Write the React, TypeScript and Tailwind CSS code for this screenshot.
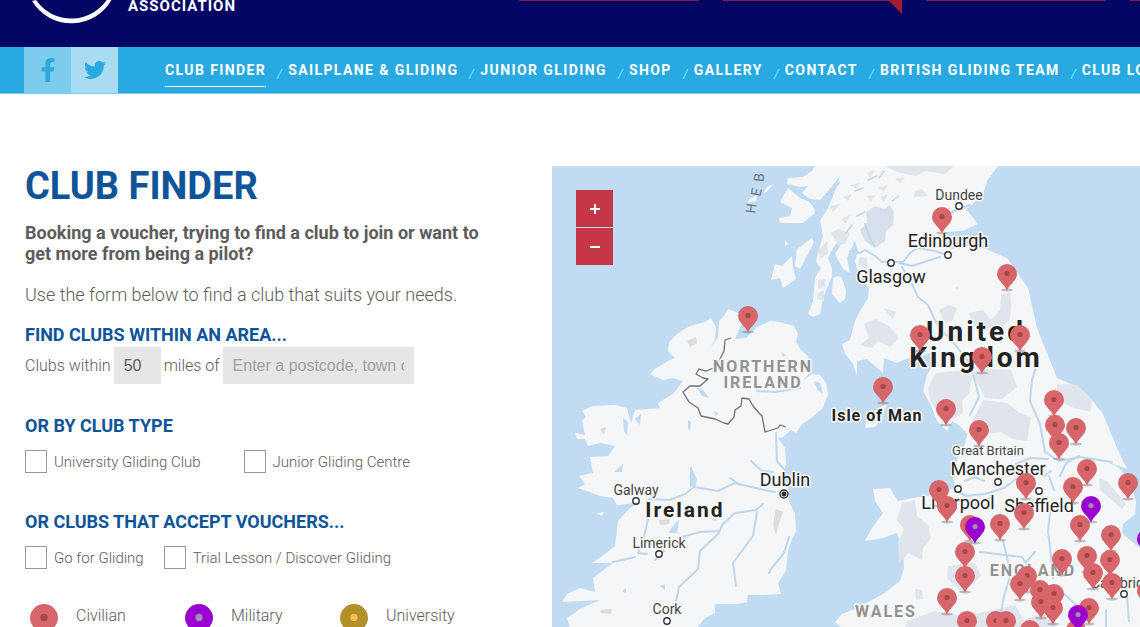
import { FaFacebookF, FaTwitter } from "react-icons/fa";

const navItems = [
  "Club Finder",
  "Sailplane & Gliding",
  "Junior Gliding",
  "Shop",
  "Gallery",
  "Contact",
  "British Gliding Team",
  "Club Login",
];

const colours = {
  civilian: { fill: "#d6666a", dot: "#a94449" },
  military: { fill: "#9a00cf", dot: "#a78bb5" },
  university: { fill: "#b38f2a", dot: "#f2c14e" },
};

type ClubKind = keyof typeof colours;

const civilianClubs = [
  [748, 315], [942, 216], [1007, 273], [920, 334], [1020, 334], [982, 356], [883, 386],
  [946, 408], [979, 429], [1054, 399], [1055, 424], [1076, 427], [1059, 442], [1087, 468],
  [1073, 486], [1128, 482], [1026, 482], [939, 489], [947, 505], [1024, 512], [1000, 523],
  [970, 524], [1080, 524], [1111, 534], [965, 551], [965, 575], [947, 597], [1062, 558],
  [1087, 555], [1110, 559], [1093, 572], [1112, 582], [1027, 575], [1020, 583], [1040, 589],
  [1054, 593], [1041, 601], [1053, 607], [1089, 607], [1147, 590], [967, 620], [996, 620],
  [1006, 620], [1030, 629], [1076, 629],
];

const militaryClubs = [[1091, 505], [975, 526], [1078, 614], [1147, 538]];

const towns = [
  [959, 205], [948, 254], [891, 262], [636, 500], [659, 553], [667, 620],
  [958, 488], [998, 481], [1039, 490], [1124, 593],
];

function PinShape({ kind }: { kind: ClubKind }) {
  return (
    <>
      <ellipse cx="0" cy="16" rx="6" ry="1.5" fill="#777" opacity="0.45" />
      <path d="M0 16.500C-2.500 10-10 6.500-10 0A10 10 0 0 1 10 0C10 6.500 2.500 10 0 16.500Z" fill={colours[kind].fill} />
      <circle cy="-0.5" r="2.6" fill={colours[kind].dot} />
    </>
  );
}

function ClubMap() {
  return (
    <svg
      className="h-full w-full"
      viewBox="0 0 588 462"
      preserveAspectRatio="xMinYMin slice"
      role="img"
      aria-label="Map of gliding clubs"
      fontFamily="Roboto, sans-serif"
    >
      <rect width="2000" height="2000" fill="#c1dbf2" />
      <g transform="translate(-552 -165)">
        {/* land */}
        <g fill="#f5f6f7">
          <path d="M650 373L655 368L668 360L675 357L668 350L669 341L678 332L690 325L705 321L711 317L716 326L715 338L711 346L718 336L719 320L724 315L728 308L738 312L743 320L737 333L735 338L746 337L752 331L757 326L770 320L780 321L794 325L798 333L796 341L801 349L808 355L811 366L808 374L802 380L812 373L820 374L826 382L828 393L823 407L810 418L802 423L796 432L791 429L783 436L778 437L785 447L786 463L782 476L789 490L789 500L795 513L796 530L792 538L788 550L786 570L778 582L781 593L763 594L748 594L747 601L737 603L715 603L715 612L705 617L697 627L697 680L570 680L570 627L567 617L580 608L600 599L562 601L567 593L580 587L595 591L593 577L605 568L613 562L592 562L605 553L615 545L618 520L630 507L640 502L617 504L613 497L600 495L578 487L585 483L579 475L593 472L590 456L608 455L615 445L600 442L588 445L585 438L577 438L575 432L585 434L582 420L586 416L582 410L592 405L615 404L627 407L631 422L635 409L660 407L658 402L673 393L683 380L673 377L663 379Z" />
          <path d="M815 165L812 170L803 176L788 177L787 183L800 186L808 185L802 192L810 198L820 199L828 190L840 175L836 188L828 207L820 220L823 235L818 252L816 260L821 267L815 277L813 300L808 313L813 316L820 313L823 297L832 275L832 268L828 257L833 247L842 234L840 245L835 253L843 268L850 272L847 257L855 240L858 250L855 260L858 270L864 278L869 288L868 297L860 310L855 320L850 339L842 343L845 353L853 363L857 375L857 360L867 358L883 372L884 357L897 362L908 357L922 355L937 350L932 366L927 374L923 390L927 397L932 407L937 420L947 430L952 420L960 425L967 433L965 443L958 457L952 470L955 487L940 493L912 497L898 500L890 487L873 488L875 500L883 512L872 527L865 540L883 537L897 532L903 548L904 567L900 580L883 593L857 607L842 613L835 621L842 627L842 680L1200 680L1200 560L1140 547L1130 539L1122 532L1123 523L1135 513L1136 500L1128 477L1118 466L1100 458L1127 468L1117 447L1103 413L1092 399L1080 387L1057 377L1053 367L1037 327L1028 287L1018 273L1007 257L983 247L975 243L967 245L950 248L957 237L963 230L978 223L970 213L966 209L983 193L987 180L998 165Z" />
          <path d="M780 201L788 187L800 197L813 202L815 212L803 222L780 222L779 217L790 215L792 207Z" />
          <path d="M812 237L814 241L800 268L795 265L797 248Z" />
          <path d="M775 263L782 265L792 255L793 267L796 278L783 287L780 277L771 279Z" />
          <path d="M833 277L838 275L842 277L846 290L845 298L840 302L832 293Z" />
          <path d="M887 403L882 417L875 426L865 427L867 417L877 408Z" />
          <path d="M773 183L767 191L763 192L767 186ZM785 239L788 243L785 245ZM749 198L757 194L756 200L748 202ZM597 512L604 511L602 515Z" />
        </g>

        {/* high ground */}
        <g fill="#dfe5ea">
          <path d="M866 211L875 205L884 208L890 204L894 212L893 224L886 230L885 240L875 247L865 240L860 229L867 222Z" fill="#d6e0ea" />
          <path d="M884 165L954 165L945 173L925 170L916 175L900 172Z" />
          <path d="M831 232L838 228L850 232L845 243L838 244ZM818 250L827 240L828 252L821 258ZM818 279L826 278L825 286L818 288ZM818 292L824 289L824 300L817 298Z" />
          <path d="M860 256L867 257L868 268L858 264ZM915 190L922 188L928 195L914 196ZM830 205L840 203L833 211Z" />
          <path d="M864 323L876 318L889 325L899 337L890 346L878 340L872 347L860 344L869 337ZM883 307L896 311L893 318ZM939 309L949 304L957 307L953 319L945 323Z" />
          <path d="M969 312L983 309L991 319L1000 309L1001 294L1010 291L1011 305L1010 318L1003 326L990 328L980 333L973 323Z" />
          <path d="M936 372L965 369L972 376L969 392L962 400L963 412L953 418L936 409L930 398L928 386Z" />
          <path d="M979 367L1011 369L1017 386L1002 398L985 397L979 385L973 374ZM983 399L1007 402L1020 412L1031 416L1027 440L1013 438L1001 431L979 434L972 421Z" />
          <path d="M1057 383L1077 384L1092 400L1090 411L1074 407L1058 400Z" />
          <path d="M902 502L915 499L917 515L928 524L931 537L923 547L922 559L908 552L899 563L898 541L904 528L897 519Z" />
          <path d="M948 565L975 562L981 575L972 584L962 592L947 577ZM907 620L935 610L957 614L980 612L1015 604L1024 619L1045 612L1058 627L905 627ZM915 588L922 589L923 598L916 599ZM1099 477L1107 480L1126 503L1122 508L1100 489Z" />
        </g>
        <g fill="#dcdddd">
          <path d="M687 340L696 336L697 342L690 346ZM600 428L606 426L604 434ZM659 519L670 518L669 523L660 524ZM710 518L717 517L716 520ZM776 508L783 511L779 522L776 534L773 524ZM600 609L612 608L611 613L601 612Z" />
          <path d="M867 172L875 169L870 177ZM850 184L860 182L856 188ZM843 196L852 193L848 200ZM878 187L888 184L884 190ZM895 178L905 176L900 182ZM866 195L876 194L871 200ZM880 196L888 193L884 201ZM841 218L850 214L846 223ZM955 287L959 285L957 289Z" opacity="0.7" />
        </g>

        {/* lakes, lochs and rivers */}
        <g fill="#c1dbf2">
          <path d="M691 465L693 470L697 478L695 486L691 484ZM676 521L679 519L677 532L668 532ZM688 419L691 421L690 430L688 427ZM614 471L623 463L622 471ZM623 417L628 421L627 435L624 430ZM635 418L641 413L640 424ZM660 585L665 583L665 589ZM622 590L626 587L626 592Z" />
          <path d="M696 386L703 389L709 397L702 395ZM814 380L820 382L823 392L818 390ZM781 351L786 354L783 356ZM714 410L718 412L716 416Z" />
          <path d="M946 231L970 229L958 237L948 238Z" />
        </g>
        <g fill="none" stroke="#bed7ec" strokeWidth="2" strokeLinecap="round" strokeLinejoin="round">
          <path d="M649 498L670 499L685 493L694 486L718 490L735 482L760 488L775 491M691 485V467M730 477L740 484" />
          <path d="M763 503L756 509L735 512L722 524L719 532L700 550L698 568L679 586L676 600M682 536L700 531L720 530M757 511L753 535L733 562L736 585M789 536L784 552L771 568L769 572M648 518L643 540L638 552L647 553M664 550L655 559" />
          <path d="M776 432L777 460L787 472M751 460L762 470L773 471M757 390L775 391L800 387M613 561L635 556" />
          <path d="M850 250L860 252L865 249L875 255L882 261L903 261L911 251L918 247L935 250L947 254M899 262L912 265L930 259L940 256M902 266L913 285L918 296L928 304L933 315L938 325L953 341L968 360L975 380L979 396L970 414" />
          <path d="M828 193L839 182M865 223L870 238L874 245M952 211L970 204M1037 363L1032 379L1030 400L1040 423L1045 451L1059 460L1080 456L1112 461M1060 475L1066 462L1079 455M1048 458L1030 457L1016 463" />
          <path d="M955 489L966 495L985 493L1004 487L1016 478L1028 470L1044 475L1051 470M965 480L975 476L984 480M976 503L990 497M1054 489L1049 475" />
          <path d="M1047 496L1050 512L1048 530L1051 555L1053 577M980 551L1005 554L1022 556L1029 567M1003 540L1008 561L1010 576L1004 595L1001 611M1027 560L1035 551M1059 588L1076 604L1090 615M1127 596L1129 620M1106 609V627" />
          <path d="M855 190L863 187M868 179L877 175M892 200L899 195M857 215L865 211M879 177L884 170M846 232L852 224M815 207L809 199" strokeWidth="1.5" />
        </g>

        {/* border */}
        <path
          d="M731 337L725 339L724 350L720 358V365L711 368L706 370L699 368L696 373L703 377L708 378L700 385L690 385L683 391L689 401L698 407L701 415L715 418L724 422L728 423L734 416L735 409L741 405L742 397L749 398L753 405L759 412L762 415L765 431L778 427L780 424L786 426"
          fill="none"
          stroke="#6f6f6f"
          strokeWidth="1.3"
          strokeLinejoin="round"
        />

        <g fill="#fff" stroke="#333" strokeWidth="1.4">
          {towns.map(([x, y]) => (
            <circle key={`${x}-${y}`} cx={x} cy={y} r="3.2" />
          ))}
          <circle cx="784" cy="493" r="4" />
          <circle cx="784" cy="493" r="1.8" fill="#222" />
        </g>

        {/* labels */}
        <g textAnchor="middle" fill="#222" stroke="#f8f8f8" strokeWidth="3" strokeLinejoin="round" paintOrder="stroke">
          <g fontSize="14" fill="#444">
            <text x="959" y="199">Dundee</text>
            <text x="636" y="494">Galway</text>
            <text x="659" y="547">Limerick</text>
            <text x="667" y="613">Cork</text>
            <text x="988" y="454" fontSize="13">Great Britain</text>
            <text x="1125" y="587">Cambridge</text>
          </g>
          <g fontSize="18" fill="#222">
            <text x="948" y="246">Edinburgh</text>
            <text x="891" y="282">Glasgow</text>
            <text x="785" y="485">Dublin</text>
            <text x="998" y="474">Manchester</text>
            <text x="958" y="508">Liverpool</text>
            <text x="1039" y="511">Sheffield</text>
          </g>
          <g fontSize="28" fontWeight="700" letterSpacing="3">
            <text x="976" y="340">United</text>
            <text x="976" y="366">Kingdom</text>
          </g>
          <text x="685" y="516" fontSize="21" fontWeight="700" letterSpacing="2">Ireland</text>
          <text x="877" y="420" fontSize="16" fontWeight="700" letterSpacing="1">Isle of Man</text>
          <g fontSize="16" fontWeight="700" letterSpacing="2" fill="#929292">
            <text x="763" y="371">NORTHERN</text>
            <text x="763" y="387">IRELAND</text>
            <text x="1033" y="575">ENGLAND</text>
            <text x="886" y="616">WALES</text>
          </g>
        </g>
        <g fontSize="14" fill="#69757f" textAnchor="middle">
          <text transform="translate(756 208) rotate(-82)">H</text>
          <text transform="translate(761 192) rotate(-78)">E</text>
          <text transform="translate(764 177) rotate(-85)">B</text>
        </g>

        {civilianClubs.map(([x, y]) => (
          <g key={`${x}-${y}`} transform={`translate(${x} ${y})`}>
            <PinShape kind="civilian" />
          </g>
        ))}
        {militaryClubs.map(([x, y]) => (
          <g key={`${x}-${y}`} transform={`translate(${x} ${y})`}>
            <PinShape kind="military" />
          </g>
        ))}
      </g>
    </svg>
  );
}

function Header() {
  return (
    <header className="relative h-[47px] overflow-hidden bg-[#030664] text-white">
      <div className="flex items-start pl-6">
        <svg className="h-6 w-[94px]" viewBox="0 0 94 24" aria-hidden="true">
          <path d="M8 1A46 46 0 0 0 88 -1L84 -2A43 43 0 0 1 12 0Z" fill="#fff" />
        </svg>
        <span className="-mt-1 ml-[10px] text-[15px] leading-5 font-bold tracking-[1px]">ASSOCIATION</span>
      </div>
      <div className="absolute top-0 left-[519px] flex gap-6">
        <div className="h-px w-[180px] bg-[#7f1b49]" />
        <div className="relative h-px w-[179px] bg-[#7f1b49]">
          <svg className="absolute top-0 right-0 h-[14px] w-[14px]" viewBox="0 0 14 14" aria-hidden="true">
            <path d="M0 0H14V14Z" fill="#9f1e32" />
          </svg>
        </div>
        <div className="h-px w-[180px] bg-[#7f1b49]" />
        <div className="h-px w-[180px] bg-[#7f1b49]" />
      </div>
    </header>
  );
}

function Nav() {
  return (
    <nav className="flex h-[47px] overflow-hidden border-b border-[#7fc8ea] bg-[#29a9e1] pl-6">
      <a href="#facebook" aria-label="Facebook" className="flex w-[47px] shrink-0 items-center justify-center bg-[#7dcbed] text-[#29a9e1]">
        <FaFacebookF size={24} />
      </a>
      <a href="#twitter" aria-label="Twitter" className="flex w-[47px] shrink-0 items-center justify-center bg-[#a9dcf3] text-[#29a9e1]">
        <FaTwitter size={22} />
      </a>
      <ul className="ml-[47px] flex text-sm font-bold tracking-widest whitespace-nowrap text-white uppercase">
        {navItems.map((item, i) => (
          <li key={item} className="flex items-start">
            {i > 0 && (
              <svg className="mt-[21px] mr-[5px] ml-[10px] h-3 w-[7px]" viewBox="0 0 7 12" aria-hidden="true">
                <path d="M1 11L6 1" stroke="#4be0f5" strokeWidth="1.6" />
              </svg>
            )}
            <a
              href={`#${item.toLowerCase().replace(/\W+/g, "-")}`}
              className={i === 0 ? "mt-[13px] border-b border-white pb-[6px]" : "mt-[13px]"}
            >
              {item}
            </a>
          </li>
        ))}
      </ul>
    </nav>
  );
}

function Check({ id, label }: { id: string; label: string }) {
  return (
    <div className="flex items-center gap-[7px]">
      <input id={id} type="checkbox" className="h-[23px] w-[22px] appearance-none border border-[#999] bg-white checked:bg-[#0e5499]" />
      <label htmlFor={id} className="text-[15px] leading-5 font-light">{label}</label>
    </div>
  );
}

function LegendItem({ kind, label }: { kind: ClubKind; label: string }) {
  return (
    <li className="flex w-[155px] items-start">
      <svg className="mt-[2px] ml-[5px] h-[38px] w-7 shrink-0" viewBox="-10 -10 20 27" aria-hidden="true">
        <PinShape kind={kind} />
      </svg>
      <span className="ml-[18px] text-base leading-7 font-light">{label}</span>
    </li>
  );
}

export default function App() {
  const heading = "text-lg leading-6 font-bold text-[#0e5499] uppercase";

  return (
    <div className="h-screen overflow-hidden bg-white font-[Roboto,sans-serif] text-[#5c5c5c]">
      <Header />
      <Nav />
      <main className="grid grid-cols-[527px_1fr] pt-[72px] pl-[25px]">
        <section>
          <h1 className="text-[38px] leading-10 font-bold text-[#0e5499] uppercase">Club Finder</h1>
          <p className="mt-4 mr-12 text-lg leading-[21px] font-bold">
            Booking a voucher, trying to find a club to join or want to get more from being a pilot?
          </p>
          <p className="mt-5 text-lg leading-[21px] font-light">Use the form below to find a club that suits your needs.</p>
          <form>
            <h2 className={`mt-[18px] ${heading}`}>Find clubs within an area...</h2>
            <div className="flex items-center gap-[3px] text-base font-light">
              <label htmlFor="miles">Clubs within</label>
              <input
                id="miles"
                defaultValue="50"
                className="h-[37px] w-[47px] bg-[#e6e6e6] px-[10px] font-['Liberation_Sans',sans-serif] font-normal"
              />
              <label htmlFor="place">miles of</label>
              <input
                id="place"
                placeholder="Enter a postcode, town or city"
                className="h-[37px] w-[191px] bg-[#e6e6e6] px-[10px] font-['Liberation_Sans',sans-serif] font-normal placeholder:text-[#a0a0a0]"
              />
            </div>
            <h2 className={`mt-[30px] ${heading}`}>Or by club type</h2>
            <div className="mt-3 flex gap-[43px]">
              <Check id="university" label="University Gliding Club" />
              <Check id="junior" label="Junior Gliding Centre" />
            </div>
            <h2 className={`mt-[37px] ${heading}`}>Or clubs that accept vouchers...</h2>
            <div className="mt-3 flex gap-5">
              <Check id="go" label="Go for Gliding" />
              <Check id="trial" label="Trial Lesson / Discover Gliding" />
            </div>
          </form>
          <ul className="mt-[33px] flex">
            <LegendItem kind="civilian" label="Civilian" />
            <LegendItem kind="military" label="Military" />
            <LegendItem kind="university" label="University" />
          </ul>
        </section>
        <section className="relative h-[calc(100vh-165px)] min-h-[462px] overflow-hidden">
          <ClubMap />
          <div className="absolute top-6 left-6 flex flex-col gap-px text-white">
            <button type="button" aria-label="Zoom in" className="flex h-[37px] w-[37px] items-center justify-center bg-[#c53647]">
              <svg className="h-[10px] w-[10px]" viewBox="0 0 10 10"><path d="M5 0V10M0 5H10" stroke="currentColor" strokeWidth="2" /></svg>
            </button>
            <button type="button" aria-label="Zoom out" className="flex h-[37px] w-[37px] items-center justify-center bg-[#c53647]">
              <svg className="h-[10px] w-[10px]" viewBox="0 0 10 10"><path d="M0 5H10" stroke="currentColor" strokeWidth="2" /></svg>
            </button>
          </div>
        </section>
      </main>
    </div>
  );
}
